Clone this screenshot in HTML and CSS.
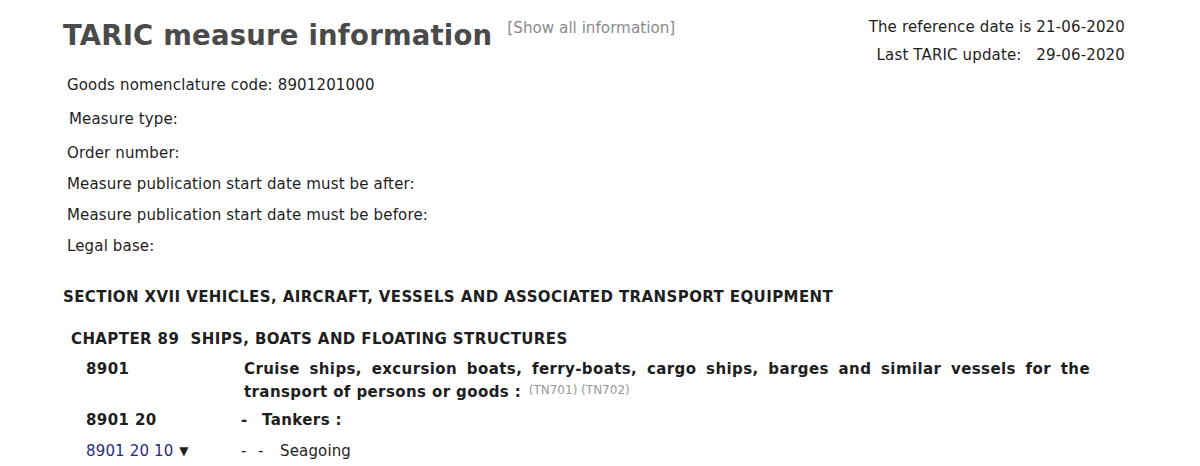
FILE: index.html
```html
<!DOCTYPE html>
<html lang="en">
  <head>
    <meta charset="UTF-8" />
    <meta name="viewport" content="width=device-width, initial-scale=1.0" />
    <title>TARIC measure information</title>
    <link rel="stylesheet" href="styles.css">
  </head>
  <body>
    <div class="page">
      <div class="top">
        <div class="title-wrap">
          <h1 class="title">TARIC measure information</h1>
          <span class="show-all">[Show all information]</span>
        </div>
        <div class="dates">
          <div>The reference date is 21-06-2020</div>
          <div>Last TARIC update:&nbsp;&nbsp; 29-06-2020</div>
        </div>
      </div>

      <div class="fields">
        <div class="field">Goods nomenclature code: 8901201000</div>
        <div class="field shifted">Measure type:</div>
        <div class="field">Order number:</div>
        <div class="field">Measure publication start date must be after:</div>
        <div class="field">Measure publication start date must be before:</div>
        <div class="field">Legal base:</div>
      </div>

      <div class="section">SECTION XVII VEHICLES, AIRCRAFT, VESSELS AND ASSOCIATED TRANSPORT EQUIPMENT</div>
      <div class="chapter">CHAPTER 89&nbsp; SHIPS, BOATS AND FLOATING STRUCTURES</div>

      <div class="codes">
        <div class="code-row">
          <div class="code bold">8901</div>
          <div class="desc bold">Cruise ships, excursion boats, ferry-boats, cargo ships, barges and similar vessels for the transport of persons or goods : <span class="note">(TN701) (TN702)</span></div>
        </div>
        <div class="code-row">
          <div class="code bold">8901 20</div>
          <div class="desc bold"><span class="dash">-</span>Tankers :</div>
        </div>
        <div class="code-row last">
          <div class="code"><a href="#" class="code-link">8901 20 10</a> <span class="arrow">&#9660;</span></div>
          <div class="desc"><span class="dash">-</span><span class="dash">-</span>Seagoing</div>
        </div>
      </div>
    </div>
  </body>
</html>
```

FILE: styles.css
```css
body {
  margin: 0;
  background-color: #fff;
  font-family: "DejaVu Sans", Verdana, sans-serif;
  font-size: 15px;
  letter-spacing: 0.15px;
  color: #1e1e1e;
}
.page {
  width: 1062px;
  padding: 0 0 0 63px;
}
.top {
  display: flex;
  justify-content: space-between;
  align-items: flex-start;
}
.title-wrap {
  display: flex;
  align-items: flex-start;
  padding-top: 17px;
}
.title {
  margin: 0;
  font-size: 27.5px;
  letter-spacing: 0.2px;
  font-weight: bold;
  color: #4a4a4a;
  line-height: 36px;
}
.show-all {
  margin-left: 15px;
  margin-top: 2px;
  font-size: 15.2px;
  letter-spacing: 0;
  color: #8a8a8a;
}
.dates {
  text-align: right;
  padding-top: 13px;
  line-height: 28px;
}
.fields {
  padding: 1px 0 0 4px;
}
.field {
  line-height: 31px;
}
.field.shifted {
  padding-left: 2px;
  line-height: 37px;
}
.section {
  margin-top: 26px;
  font-weight: bold;
  letter-spacing: 0.4px;
}
.chapter {
  margin-top: 24px;
  padding-left: 8px;
  font-weight: bold;
  letter-spacing: 0.4px;
}
.codes {
  padding-left: 23px;
}
.code-row {
  display: flex;
  margin-top: 10px;
}
.code-row + .code-row {
  margin-top: 4px;
}
.code-row.last {
  margin-top: 8px;
}
.code {
  width: 158px;
  flex-shrink: 0;
  line-height: 23px;
}
.desc {
  width: 846px;
  text-align: justify;
  line-height: 23px;
}
.bold {
  font-weight: bold;
  letter-spacing: 0.4px;
}
.dash {
  display: inline-block;
  width: 17px;
}
.desc .dash:first-child {
  margin-left: -3px;
}
.desc .dash + .dash {
  width: 22px;
}
.desc.bold .dash {
  width: 21px;
}
.note {
  position: relative;
  top: -3px;
  margin-left: 2px;
  font-weight: normal;
  font-size: 12px;
  letter-spacing: 0;
  color: #999;
}
.code-link {
  color: #2a2a80;
  text-decoration: none;
}
.arrow {
  font-size: 12px;
  margin-left: 1px;
  vertical-align: 1px;
}
```
